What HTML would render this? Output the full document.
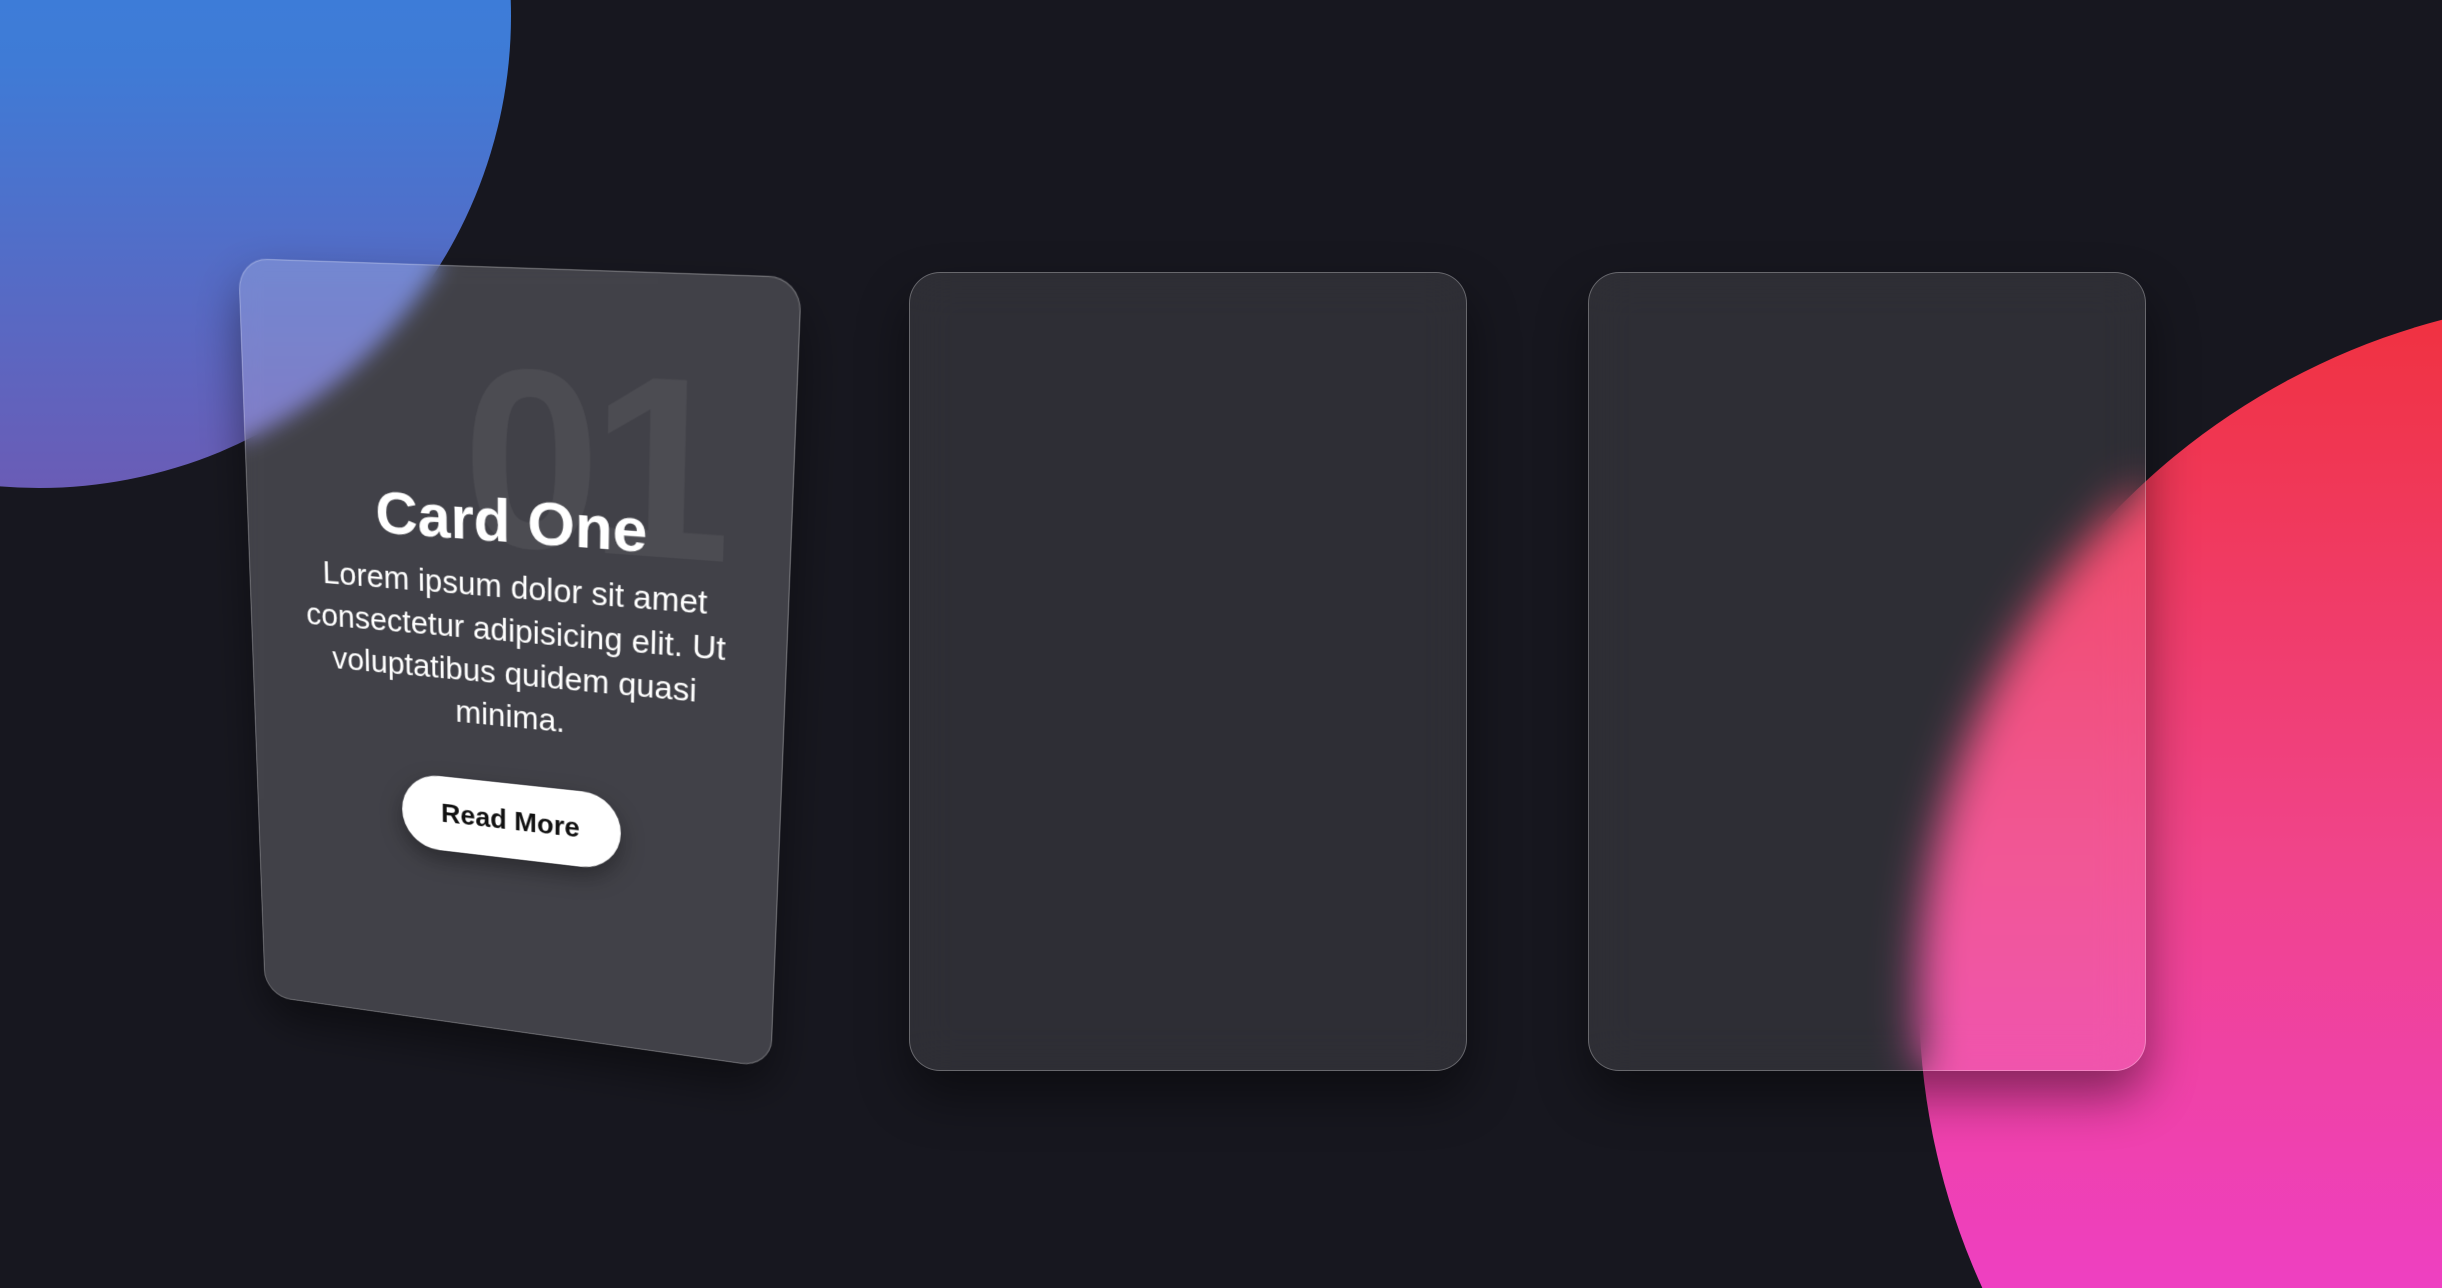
<!DOCTYPE html>
<html><head><meta charset="utf-8">
<style>
html,body{margin:0;padding:0;width:2442px;height:1288px;overflow:hidden;background:#17171f}
#wrap{position:relative;width:2442px;height:1288px;overflow:hidden;background:#17171f;font-family:"Liberation Sans",sans-serif;clip-path:inset(0)}
svg.bg{position:absolute;left:0;top:0}
.card{position:absolute;width:558px;height:799px;border-radius:31px;background:rgba(255,255,255,0.1);border:1.5px solid rgba(255,255,255,0.28);backdrop-filter:blur(22px);-webkit-backdrop-filter:blur(22px);box-shadow:0 25px 50px rgba(0,0,0,0.45);box-sizing:border-box}
.c2{left:909px;top:272px}
.c3{left:1588px;top:272px}
.c1{left:0;top:0;transform-origin:0 0;transform:matrix3d(0.90007,-0.004176,0,-0.00013801,0.07025,1.06067,0,0.00013756,0,0,1,0,238,258,0,1);background:rgba(255,255,255,0.18);overflow:hidden}
.num{position:absolute;left:130px;top:60px;width:460px;text-align:center;font-weight:bold;font-size:250px;color:rgba(255,255,255,0.06);line-height:1;letter-spacing:-10px}
.title{position:absolute;left:0;width:100%;top:212px;text-align:center;color:#fff;font-weight:bold;font-size:62px;line-height:70px}
.p{position:absolute;left:36px;width:486px;top:290px;text-align:center;color:#fff;font-size:33px;line-height:45px}
.btn{position:absolute;left:162px;top:520px;width:234px;height:82px;border-radius:42px;background:#fff;color:#111;font-weight:bold;font-size:29px;text-align:center;line-height:82px;box-shadow:0 10px 25px rgba(0,0,0,0.35)}
</style></head><body>
<div id="wrap">
<svg class="bg" width="2442" height="1288" viewBox="0 0 2442 1288">
<defs>
<linearGradient id="gb" x1="0" y1="0" x2="0" y2="1"><stop offset="0" stop-color="#2f86e6"/><stop offset="0.55" stop-color="#3f7bd6"/><stop offset="1" stop-color="#6a5cb6"/></linearGradient>
<linearGradient id="gp" x1="0" y1="0" x2="0" y2="1"><stop offset="0" stop-color="#f0313e"/><stop offset="0.4" stop-color="#f0448a"/><stop offset="0.75" stop-color="#ee3fc9"/><stop offset="1" stop-color="#e83ae6"/></linearGradient>
</defs>
<circle cx="39" cy="16" r="472" fill="url(#gb)"/>
<circle cx="2619" cy="997" r="700" fill="url(#gp)"/>
</svg>
<div class="card c2"></div>
<div class="card c3"></div>
<div class="card c1">
<div class="num">01</div>
<div class="title">Card One</div>
<div class="p">Lorem ipsum dolor sit amet consectetur adipisicing elit. Ut voluptatibus quidem quasi minima.</div>
<div class="btn">Read More</div>
</div>
</div>
</body></html>
